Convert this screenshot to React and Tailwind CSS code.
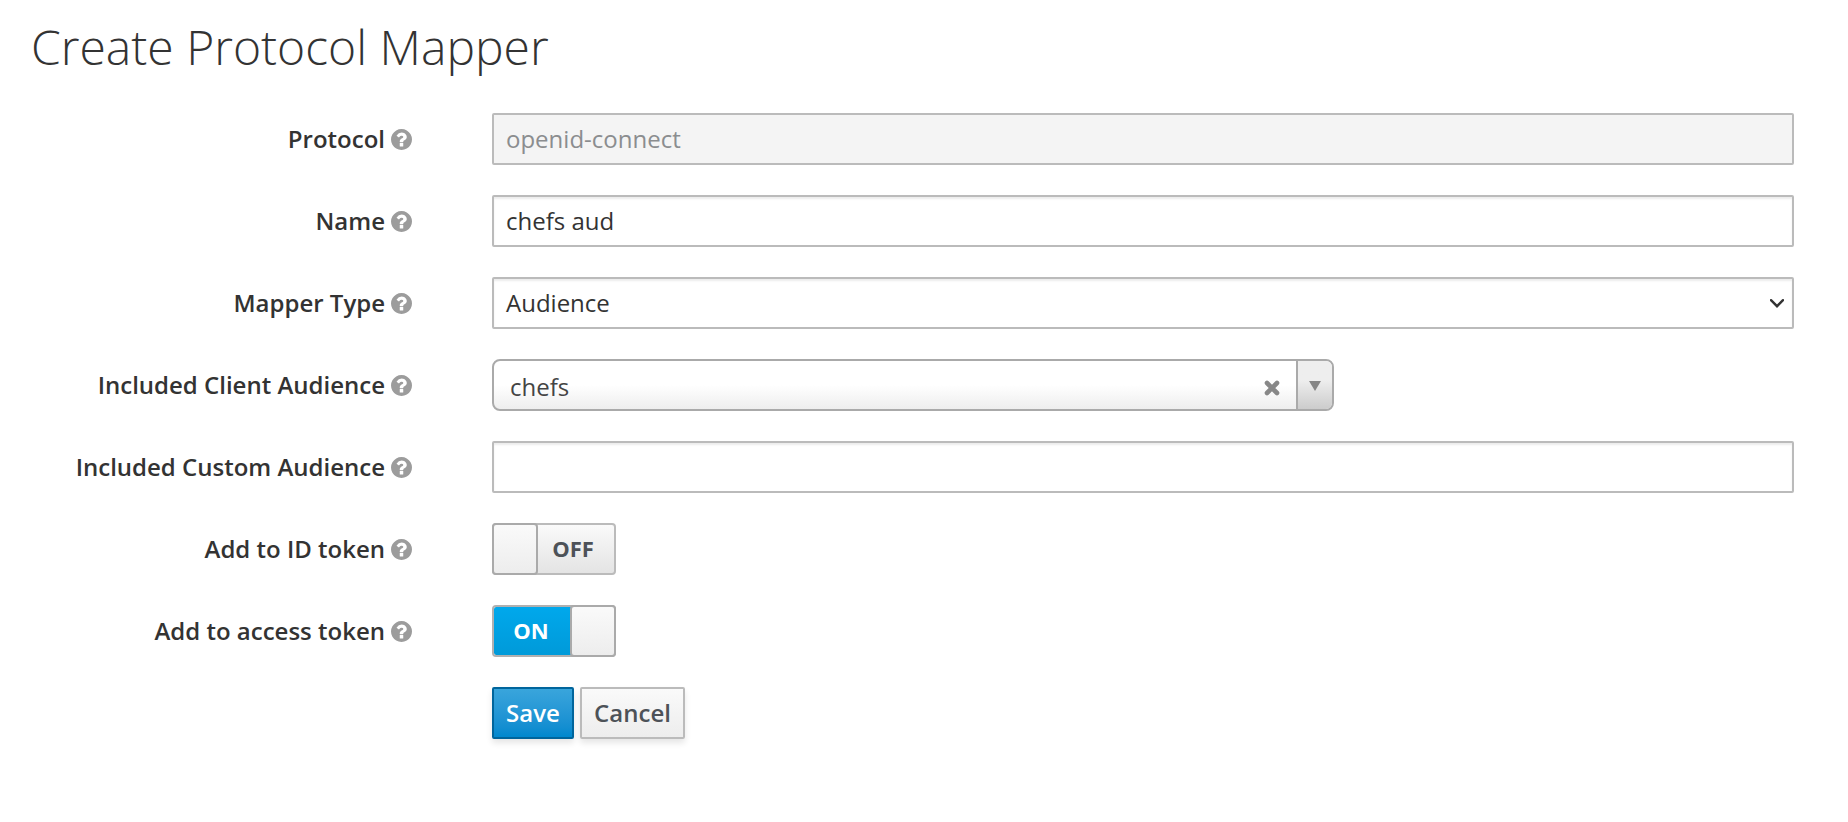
import React from "react";

const INPUT =
  "flex h-[52px] w-[1302px] items-center rounded-[2px] border-2 border-[#bbb] px-3";

function HelpIcon() {
  return (
    <svg className="ml-1.5 h-[21px] w-[21px] shrink-0 fill-[#9c9c9c]" viewBox="128 128 1536 1536">
      <path d="M1024 1376v-192q0-14-9-23t-23-9h-192q-14 0-23 9t-9 23v192q0 14 9 23t23 9h192q14 0 23-9t9-23zm256-672q0-88-55.5-163t-138.5-116-170-41q-243 0-371 213-15 24 8 42l132 100q7 6 19 6 16 0 25-12 53-68 86-92 34-24 86-24 48 0 85.500 26t37.500 59q0 38-20 61t-68 45q-63 28-115.500 86.500t-52.500 125.500v36q0 14 9 23t23 9h192q14 0 23-9t9-23q0-19 21.500-49.500t54.500-49.500q32-18 49-28.500t46-35 44.500-48 28-60.500 12.500-81zm384 192q0 209-103 385.500t-279.500 279.500-385.500 103-385.500-103-279.500-279.500-103-385.500 103-385.500 279.500-279.500 385.500-103 385.500 103 279.500 279.500 103 385.500z" />
    </svg>
  );
}

function Row({ label, children }) {
  return (
    <div className="flex h-[52px] items-center">
      <div className="mr-20 flex w-[412px] items-center justify-end">
        <span className="font-semibold whitespace-nowrap">{label}</span>
        <HelpIcon />
      </div>
      {children}
    </div>
  );
}

export default function App() {
  return (
    <main className="h-[822px] w-[1848px] overflow-hidden bg-white font-['Open_Sans',sans-serif] text-[24px] leading-[40px] text-[#333]">
      <h1 className="pt-[20px] pl-[31px] text-[48px] leading-[53px] font-light">Create Protocol Mapper</h1>
      <form className="mt-10 flex flex-col gap-[30px]">
        <Row label="Protocol">
          <div className={`${INPUT} bg-[#f4f4f4] text-[#8b8d8f]`}>openid-connect</div>
        </Row>
        <Row label="Name">
          <div className={`${INPUT} shadow-[inset_0_2px_2px_rgba(3,3,3,0.075)]`}>chefs aud</div>
        </Row>
        <Row label="Mapper Type">
          <div className={`${INPUT} justify-between pr-2 shadow-[inset_0_2px_2px_rgba(3,3,3,0.075)]`}>
            Audience
            <svg className="h-[9px] w-[14px]" viewBox="0 0 14 9" fill="none" stroke="#333" strokeWidth="2.4">
              <path d="M1 1.200l6 6 6-6" strokeLinecap="round" />
            </svg>
          </div>
        </Row>
        <Row label="Included Client Audience">
          <div className="flex h-[52px] w-[842px] overflow-hidden rounded-lg border-2 border-[#aaa] bg-linear-to-t from-[#eee] to-white to-50% text-[#444]">
            <div className="flex flex-1 items-center justify-between pt-1 pr-4 pl-4">
              <span>chefs</span>
              <svg className="mt-px h-[16px] w-[16px]" viewBox="0 0 16 16" stroke="#888" strokeWidth="4.600" strokeLinecap="round">
                <path d="M3 3l10 10M13 3L3 13" />
              </svg>
            </div>
            <div className="flex w-[36px] items-center justify-center border-l-2 border-[#aaa] bg-linear-to-t from-[#ccc] to-[#eee] to-60%">
              <svg className="mt-0.5 h-[10px] w-[12px] fill-[#868686]" viewBox="0 0 12 10">
                <path d="M0 0h12L6 10z" />
              </svg>
            </div>
          </div>
        </Row>
        <Row label="Included Custom Audience">
          <div className={`${INPUT} shadow-[inset_0_2px_2px_rgba(3,3,3,0.075)]`} />
        </Row>
        <Row label="Add to ID token">
          <div className="flex h-[52px] w-[124px] rounded-[4px] border-2 border-[#bbb] bg-linear-to-b from-[#fafafa] to-[#e4e4e4]">
            <div className="-my-0.5 -ml-0.5 w-[46px] rounded-[4px] border-2 border-[#aaa] bg-linear-to-b from-[#fafafa] to-[#ededed]" />
            <span className="flex flex-1 items-center justify-center pr-1.5 pb-0.5 text-[22px] font-bold text-[#4d5258]">OFF</span>
          </div>
        </Row>
        <Row label="Add to access token">
          <div className="flex h-[52px] w-[124px] rounded-[4px] border-2 border-[#b0b0b0] bg-linear-to-b from-[#00a8ec] to-[#009ad9] bg-clip-padding">
            <span className="flex flex-1 items-center justify-center pr-0.5 pb-0.5 text-[22px] font-bold text-white">ON</span>
            <div className="-my-0.5 -mr-0.5 w-[46px] rounded-[4px] border-2 border-[#aaa] bg-linear-to-b from-[#fafafa] to-[#ededed]" />
          </div>
        </Row>
        <div className="ml-[492px] flex gap-1.5 font-semibold">
          <div className="flex h-[52px] w-[82px] items-center justify-center rounded-[2px] border-2 border-[#00659c] bg-linear-to-b from-[#39a5dc] to-[#0088ce] text-white shadow-[0_4px_6px_rgba(3,3,3,0.1)]">Save</div>
          <div className="flex h-[52px] w-[105px] items-center justify-center rounded-[2px] border-2 border-[#bbb] bg-linear-to-b from-[#fafafa] to-[#ededed] text-[#4d5258] shadow-[0_4px_6px_rgba(3,3,3,0.1)]">Cancel</div>
        </div>
      </form>
    </main>
  );
}
